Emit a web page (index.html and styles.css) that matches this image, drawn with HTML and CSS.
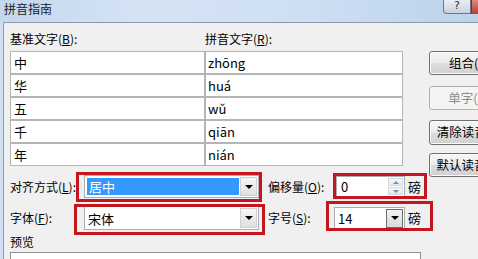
FILE: index.html
```html
<!DOCTYPE html>
<html lang="zh-CN">
<head>
<meta charset="utf-8">
<title>拼音指南</title>
<link rel="stylesheet" href="styles.css">
</head>
<body>
<div class="window">
  <div class="titlebar">
    <span class="title">拼音指南</span>
    <div class="caption-btns">
      <span class="btn-help">?</span>
      <span class="btn-close"></span>
    </div>
  </div>
  <div class="frame">
    <div class="content">
      <div class="top">
        <div class="left">
          <div class="col-labels">
            <span>基准文字(<u>B</u>):</span>
            <span>拼音文字(<u>R</u>):</span>
          </div>
          <div class="table">
            <div class="cell">中</div><div class="cell">zhōng</div>
            <div class="cell">华</div><div class="cell">huá</div>
            <div class="cell">五</div><div class="cell">wǔ</div>
            <div class="cell">千</div><div class="cell">qiān</div>
            <div class="cell">年</div><div class="cell">nián</div>
          </div>
        </div>
        <div class="right">
          <div class="button b1">组合(<u>G</u>)</div>
          <div class="button b2 disabled">单字(<u>M</u>)</div>
          <div class="button b3">清除读音(<u>C</u>)</div>
          <div class="button b4">默认读音(<u>D</u>)</div>
        </div>
      </div>
      <div class="form">
        <span class="lbl">对齐方式(<u>L</u>):</span>
        <div class="combo">
          <span class="combo-text selected">居中</span>
          <span class="drop"><i class="tri"></i></span>
        </div>
        <span class="lbl lbl2">偏移量(<u>O</u>):</span>
        <div class="unit-wrap">
          <div class="spin">
            <span class="spin-text">0</span>
            <span class="spin-btns">
              <span class="sb"><i class="tri-up"></i></span>
              <span class="sb"><i class="tri-down"></i></span>
            </span>
          </div>
          <span class="unit">磅</span>
        </div>

        <span class="lbl">字体(<u>F</u>):</span>
        <div class="combo">
          <span class="combo-text">宋体</span>
          <span class="drop"><i class="tri"></i></span>
        </div>
        <span class="lbl lbl2">字号(<u>S</u>):</span>
        <div class="unit-wrap">
          <div class="combo small">
            <span class="combo-text">14</span>
            <span class="drop hot"><i class="tri"></i></span>
          </div>
          <span class="unit">磅</span>
        </div>
      </div>
      <div class="preview-label">预览</div>
      <div class="preview"></div>
    </div>
  </div>
</div>
<div class="mark m1"></div>
<div class="mark m2"></div>
<div class="mark m3"></div>
<div class="mark m4"></div>
</body>
</html>
```
FILE: styles.css
```css
html, body {
  margin: 0;
  padding: 0;
}
body {
  width: 478px;
  height: 259px;
  overflow: hidden;
  position: relative;
  background: #f0f0f0;
  font-family: "Noto Sans CJK SC", "Noto Sans", sans-serif;
  font-size: 12px;
  color: #000;
}
u { text-decoration: underline; text-underline-offset: 1px; }

.window {
  display: flex;
  flex-direction: column;
  height: 259px;
  overflow: hidden;
}
.titlebar {
  height: 22px;
  display: flex;
  align-items: flex-start;
  background: linear-gradient(to right, #c3d7ee 0%, #d5e4f5 30%, #cfe0f3 60%, #bcd3ec 100%);
  flex: none;
}
.title {
  margin-left: 4px;
  line-height: 18px;
  font-size: 12px;
  color: #1a1a1a;
}
.caption-btns {
  margin-left: auto;
  display: flex;
}
.btn-help {
  width: 26px;
  height: 13px;
  border: 1px solid #6c7785;
  border-top: none;
  border-radius: 0 0 0 4px;
  background: linear-gradient(to bottom, #e9eef4, #c9d2dd);
  font-size: 11px;
  line-height: 11px;
  text-align: center;
  color: #333;
  font-family: "DejaVu Sans", sans-serif;
}
.btn-close {
  width: 6px;
  height: 14px;
  background: linear-gradient(to bottom, #d98a80, #c0392f);
  border-left: 1px solid #6c3a35;
}

.frame {
  flex: 1;
  display: flex;
  background: #cfdff1;
  padding-left: 3px;
  min-height: 0;
}
.content {
  flex: 1;
  min-width: 0;
  background: #f0f0f0;
  border-left: 1px solid #8e9aab;
  border-top: 1px solid #8e9aab;
  padding: 7px 0 0 6px;
  overflow: hidden;
}

.top {
  display: flex;
  align-items: flex-start;
  height: 136px;
}
.left {
  width: 393px;
  flex: none;
}
.col-labels {
  display: grid;
  grid-template-columns: 195px 198px;
  height: 18px;
  line-height: 18px;
  margin-bottom: 3px;
}
.table {
  display: grid;
  grid-template-columns: 195px 198px;
  grid-auto-rows: 23px;
}
.cell {
  box-sizing: border-box;
  border: 1px solid #b5b5b5;
  background: #fff;
  padding-left: 3px;
  line-height: 21px;
  font-size: 13px;
}
.cell:nth-child(even) {
  padding-left: 2px;
}

.right {
  margin-left: 26px;
  padding-top: 21px;
  display: flex;
  flex-direction: column;
  flex: none;
}
.button {
  box-sizing: border-box;
  width: 82px;
  height: 24px;
  border: 1px solid #707070;
  border-radius: 3px;
  background: linear-gradient(to bottom, #f6f6f6 0%, #ebebeb 48%, #dddddd 52%, #d0d0d0 100%);
  box-shadow: inset 0 0 0 1px #fbfbfb;
  text-align: center;
  line-height: 22px;
  font-size: 12.5px;
  white-space: nowrap;
  overflow: hidden;
}
.b2 { margin-top: 11px; }
.b3 { margin-top: 10px; height: 25px; }
.b4 { margin-top: 8px; }
.button.disabled {
  border-color: #adb2b5;
  background: #f4f4f4;
  box-shadow: none;
  color: #8d8d8d;
}

.form {
  margin-top: 9px;
  display: grid;
  grid-template-columns: 74px 175px 9px 66px auto;
  grid-template-rows: 23px 24px;
  row-gap: 8px;
  align-items: center;
}
.lbl {
  line-height: 18px;
}
.lbl2 {
  grid-column: 4;
}
.combo {
  box-sizing: border-box;
  height: 100%;
  border: 1px solid #abadb3;
  background: #fff;
  display: flex;
  align-items: stretch;
  padding: 1px;
}
.combo-text {
  flex: 1;
  padding-left: 2px;
  font-size: 13px;
  display: flex;
  align-items: center;
}
.combo-text.selected {
  background: #3399ff;
  color: #fff;
  margin: 1px 0 1px 1px;
}
.drop {
  width: 15px;
  margin-left: 1px;
  border: 1px solid #d0d0d0;
  background: linear-gradient(to bottom, #f6f6f6, #e0e0e0);
  display: flex;
  align-items: center;
  justify-content: center;
}
.drop.hot {
  border-color: #6d6d6d;
  background: linear-gradient(to bottom, #f2f2f2, #dadada);
}
.tri {
  width: 0;
  height: 0;
  border-left: 4px solid transparent;
  border-right: 4px solid transparent;
  border-top: 4px solid #000;
}

.unit-wrap {
  display: flex;
  align-items: center;
  height: 100%;
}
.spin {
  box-sizing: border-box;
  margin-left: 2px;
  width: 69px;
  height: 21px;
  border: 1px solid #abadb3;
  background: #fff;
  display: flex;
  padding: 1px;
}
.spin-text {
  flex: 1;
  padding-left: 3px;
  line-height: 17px;
  font-size: 13px;
}
.spin-btns {
  width: 15px;
  display: flex;
  flex-direction: column;
  gap: 1px;
}
.sb {
  flex: 1;
  border: 1px solid #d4d9df;
  background: linear-gradient(to bottom, #f5f7f9, #e3e8ee);
  display: flex;
  align-items: center;
  justify-content: center;
}
.tri-up {
  width: 0; height: 0;
  border-left: 3px solid transparent;
  border-right: 3px solid transparent;
  border-bottom: 3px solid #7c8fa8;
}
.tri-down {
  width: 0; height: 0;
  border-left: 3px solid transparent;
  border-right: 3px solid transparent;
  border-top: 3px solid #7c8fa8;
}
.combo.small {
  width: 71px;
  height: 23px;
}
.unit {
  margin-left: 3px;
  font-size: 13px;
  line-height: 18px;
}

.preview-label {
  margin-top: 3px;
  line-height: 18px;
}
.preview {
  margin-top: 1px;
  width: 409px;
  height: 20px;
  border: 1px solid #8e8f8f;
  background: #fff;
}

.mark {
  position: absolute;
  box-sizing: border-box;
  border: 3px solid #c3161e;
}
.m1 { left: 76px; top: 172px; width: 186px; height: 30px; }
.m2 { left: 74px; top: 204px; width: 191px; height: 31px; }
.m3 { left: 333px; top: 173px; width: 94px; height: 26px; }
.m4 { left: 326px; top: 201px; width: 107px; height: 30px; }
```
